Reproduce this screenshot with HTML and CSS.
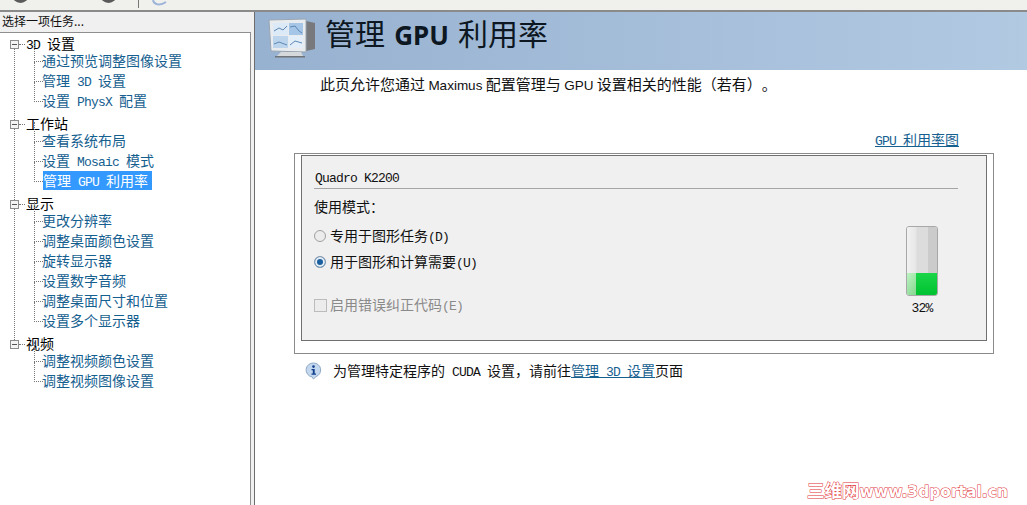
FILE: index.html
```html
<!DOCTYPE html>
<html lang="zh-CN">
<head>
  <meta charset="UTF-8">
  <title>管理 GPU 利用率</title>
  <link rel="stylesheet" href="styles.css">
</head>
<body>

  <div class="barra">
    <span class="bola"></span>
    <span class="bola bola-2"></span>
    <span class="separador"></span>
    <svg class="barra-icone" width="16" height="11" viewBox="0 0 16 11"><path d="M1 0 C2 5 8 6 14 2" fill="none" stroke="#9db5d8" stroke-width="2"/></svg>
  </div>

  <div class="janela">
    <div class="menu-lateral">
      <div class="menu-titulo">选择一项任务...</div>
      <div class="arvore">
        <div class="grupo">
          <div class="grupo-nome"><span class="caixa"></span><span class="en">3D </span>设置</div>
          <div class="item">通过预览调整图像设置</div>
          <div class="item">管理<span class="en"> 3D </span>设置</div>
          <div class="item">设置<span class="en"> PhysX </span>配置</div>
        </div>
        <div class="grupo">
          <div class="grupo-nome"><span class="caixa"></span>工作站</div>
          <div class="item">查看系统布局</div>
          <div class="item">设置<span class="en"> Mosaic </span>模式</div>
          <div class="item"><span class="ativo">管理<span class="en"> GPU </span>利用率</span></div>
        </div>
        <div class="grupo">
          <div class="grupo-nome"><span class="caixa"></span>显示</div>
          <div class="item">更改分辨率</div>
          <div class="item">调整桌面颜色设置</div>
          <div class="item">旋转显示器</div>
          <div class="item">设置数字音频</div>
          <div class="item">调整桌面尺寸和位置</div>
          <div class="item">设置多个显示器</div>
        </div>
        <div class="grupo">
          <div class="grupo-nome"><span class="caixa"></span>视频</div>
          <div class="item">调整视频颜色设置</div>
          <div class="item">调整视频图像设置</div>
        </div>
      </div>
    </div>

    <div class="conteudo">
      <div class="cabecalho">
        <svg class="monitor" width="48" height="40" viewBox="0 0 48 40">
          <path d="M38 3 L47 5 V31 L38 33 Z" fill="#77797c"/>
          <path d="M1 2 L38 1 V34 L3 33 Z" fill="#e8ecef" stroke="#9aa6b2" stroke-width="1"/>
          <rect x="5" y="5" width="15" height="12" fill="#dce9f6"/>
          <rect x="21" y="5" width="14" height="12" fill="#a5c6e6"/>
          <rect x="5" y="18" width="15" height="12" fill="#bcd5ec"/>
          <rect x="21" y="18" width="14" height="12" fill="#e3eef8"/>
          <path d="M6 13 L11 10 L15 12 L19 8 M22 9 L27 8 L31 13 L34 15 M6 26 L11 24 L19 27 M22 27 L27 23 L34 25" fill="none" stroke="#5d88b5" stroke-width="1"/>
          <path d="M13 34 H33 L35 38 H9 Z" fill="#d6d9dc"/>
          <rect x="7" y="38" width="30" height="1.5" fill="#6f7478"/>
        </svg>
        <h1 class="titulo">管理 <span class="titulo-en">GPU</span> 利用率</h1>
      </div>

      <p class="descricao">此页允许您通过 <span class="sans">Maximus</span> 配置管理与 <span class="sans">GPU</span> 设置相关的性能（若有）。</p>

      <div class="link-linha"><a class="link" href="#"><span class="en">GPU </span>利用率图</a></div>

      <div class="caixa-externa">
        <div class="painel">
          <div class="placa"><span class="en">Quadro K2200</span></div>
          <div class="painel-corpo">
            <div class="opcoes">
              <div class="modo">使用模式：</div>
              <div class="opcao opcao-1"><span class="radio"></span><span>专用于图形任务<span class="en">(D)</span></span></div>
              <div class="opcao opcao-2"><span class="radio radio-on"></span><span>用于图形和计算需要<span class="en">(U)</span></span></div>
              <div class="opcao opcao-3 desativado"><span class="check"></span><span>启用错误纠正代码<span class="en">(E)</span></span></div>
            </div>
            <div class="medidor-col">
              <div class="medidor">
                <div class="medidor-vazio"></div>
                <div class="medidor-cheio" style="height: 32%"></div>
              </div>
              <div class="medidor-valor en">32%</div>
            </div>
          </div>
        </div>
      </div>

      <div class="aviso">
        <svg class="info" width="17" height="18" viewBox="0 0 17 18">
          <path d="M8.5 1 A7 7 0 0 1 11 14.6 L8.5 17 L7 14.9 A7 7 0 0 1 8.5 1 Z" fill="#c3d8ee" stroke="#8fa9c6" stroke-width="1"/>
          <circle cx="8.5" cy="4.6" r="1.3" fill="#123f8c"/>
          <path d="M6.5 7 H9.7 V11.6 H11 V12.8 H6.5 V11.6 H7.8 V8.2 H6.5 Z" fill="#123f8c"/>
        </svg>
        <span>为管理特定程序的<span class="en"> CUDA </span>设置，请前往<a class="link" href="#">管理<span class="en"> 3D </span>设置</a>页面</span>
      </div>
    </div>
  </div>

  <div class="marca">三维网<span class="marca-en">www.3dportal.cn</span></div>

</body>
</html>
```

FILE: styles.css
```css
* {
  box-sizing: border-box;
  margin: 0;
  padding: 0;
}

html, body {
  height: 100%;
  overflow: hidden;
}

body {
  display: flex;
  flex-direction: column;
  position: relative;
  background-color: #ffffff;
  color: #111;
  font-family: "Noto Sans CJK SC", "Liberation Sans", sans-serif;
  font-size: 14px;
  line-height: 14px;
  text-spacing-trim: space-all;
}

/* latim monoespacado, 7px por caractere como no original */
.en {
  font-family: "Liberation Mono", "Noto Sans CJK SC", monospace;
  font-size: 13px;
  letter-spacing: -0.8px;
  white-space: pre;
}

.sans {
  font-family: "Liberation Sans", sans-serif;
  font-size: 13.5px;
}

.barra {
  display: flex;
  flex: none;
  height: 12px;
  overflow: hidden;
  background-color: #f0f0ed;
  border-bottom: 2px solid #8a8a8a;
}

.bola {
  width: 17px;
  height: 17px;
  margin: -14px 0 0 12px;
  border-radius: 50%;
  background-color: #5a5a5a;
}

.bola-2 {
  margin-left: 71px;
}

.separador {
  width: 1px;
  height: 8px;
  margin-left: 21px;
  background-color: #777;
}

.barra-icone {
  margin-left: 13px;
}

.janela {
  display: flex;
  flex: 1;
  min-height: 0;
}

.menu-lateral {
  display: flex;
  flex-direction: column;
  width: 254px;
  flex: none;
  background-color: #f0f0f0;
  padding-right: 3px;
}

.menu-titulo {
  height: 20px;
  padding: 1px 0 0 2px;
  font-size: 12px;
  line-height: 16px;
}

.arvore {
  flex: 1;
  padding: 3px 0 0 0;
  background-color: #ffffff;
  border: 1px solid #8e8e8e;
  border-bottom: none;
  border-left: none;
}

.grupo {
  position: relative;
  margin-bottom: 6px;
}

.grupo:not(:last-child)::before {
  content: "";
  position: absolute;
  left: 14px;
  top: 13px;
  bottom: -12px;
  border-left: 1px dotted #777;
}

.grupo-nome {
  height: 14px;
  padding-left: 26px;
  color: #000;
  white-space: pre;
}

.caixa {
  position: absolute;
  left: 10px;
  top: 4px;
  width: 9px;
  height: 9px;
  background-color: #f4f4f4;
  border: 1px solid #8c8c8c;
}

.caixa::before {
  content: "";
  position: absolute;
  left: 1px;
  top: 3px;
  width: 5px;
  height: 1px;
  background-color: #555;
}

.caixa::after {
  content: "";
  position: absolute;
  left: 8px;
  top: 3px;
  width: 6px;
  border-top: 1px dotted #777;
}

.item {
  position: relative;
  height: 20px;
  padding-left: 42px;
  color: #15608f;
  line-height: 20px;
  white-space: pre;
}

.item::before {
  content: "";
  position: absolute;
  left: 34px;
  top: -8px;
  width: 8px;
  height: 19px;
  border-left: 1px dotted #777;
  border-bottom: 1px dotted #777;
}

.ativo {
  display: inline-block;
  height: 19px;
  margin: 1px 0 0 1px;
  padding-right: 4px;
  background-color: #3399ff;
  color: #ffffff;
  line-height: 19px;
  vertical-align: top;
}

.conteudo {
  flex: 1;
  min-width: 0;
  border-left: 1px solid #6d6d6d;
}

.cabecalho {
  display: flex;
  height: 58px;
  padding: 6px 0 0 13px;
  background: linear-gradient(to right, #97b1d0, #b2c9e2);
}

.monitor {
  flex: none;
}

.titulo {
  margin: -3px 0 0 9px;
  color: #0d1722;
  font-size: 30px;
  font-weight: normal;
  line-height: 34px;
  word-spacing: 2.5px;
  white-space: pre;
}

.titulo-en {
  font-family: "Noto Sans", sans-serif;
  font-size: 26px;
  font-weight: bold;
}

.descricao {
  height: 21px;
  padding: 6px 0 0 65px;
  font-size: 15px;
  line-height: 15px;
}

.link-linha {
  height: 14px;
  margin-top: 41px;
  padding-right: 68px;
  text-align: right;
}

.link {
  color: #15608f;
  text-decoration: underline;
}

.caixa-externa {
  margin: 7px 33px 0 39px;
  border: 1px solid #8a8a8a;
}

.painel {
  margin: 1px 6px 12px 6px;
  height: 186px;
  padding: 13px 28px 0 12px;
  background-color: #f0f0f0;
  border: 1px solid #6f6f6f;
}

.placa {
  height: 20px;
  padding-left: 1px;
  border-bottom: 1px solid #a5a5a5;
}

.painel-corpo {
  display: flex;
  justify-content: space-between;
}

.modo {
  height: 14px;
  margin-top: 10px;
}

.opcao {
  display: flex;
  align-items: center;
  height: 14px;
}

.opcao-1 {
  margin-top: 16px;
}

.opcao-2 {
  margin-top: 12px;
}

.opcao-3 {
  margin-top: 29px;
}

.desativado {
  color: #8a8a8a;
}

.radio {
  width: 12px;
  height: 12px;
  margin-right: 4px;
  border-radius: 50%;
  background-color: #ececec;
  border: 1px solid #a0a0a0;
}

.radio-on {
  background-color: #1b5f9e;
  border: 1px solid #8b9db0;
  box-shadow: inset 0 0 0 2px #e6eef6;
}

.check {
  width: 13px;
  height: 13px;
  margin-right: 3px;
  background-color: #ececec;
  border: 1px solid #bcbcbc;
}

.medidor-col {
  display: flex;
  flex-direction: column;
  align-items: center;
  width: 32px;
  margin: 37px 20px 0 0;
}

.medidor {
  display: flex;
  flex-direction: column;
  width: 32px;
  height: 70px;
  overflow: hidden;
  border: 1px solid #a8a8a8;
  border-radius: 3px;
}

.medidor-vazio {
  flex: 1;
  background: linear-gradient(to right, #f2f2f2 0, #e6e6e6 9px, #dcdcdc 10px, #dcdcdc 21px, #cbcbcb 21px);
}

.medidor-cheio {
  background:
    linear-gradient(to bottom, rgba(255, 255, 255, 0.1), rgba(0, 120, 30, 0.15)),
    linear-gradient(to right, #b6f2bb 0, #9be8a4 9px, #00d034 9px);
}

.medidor-valor {
  margin-top: 6px;
  white-space: nowrap;
}

.aviso {
  display: flex;
  align-items: center;
  height: 18px;
  margin: 8px 0 0 50px;
  gap: 11px;
  white-space: pre;
}

.marca {
  position: absolute;
  left: 807px;
  top: 481px;
  color: #ffffff;
  font-family: "Noto Sans CJK SC", sans-serif;
  font-size: 17.5px;
  font-weight: bold;
  line-height: 18px;
  -webkit-text-stroke: 1px #e0333a;
  paint-order: stroke fill;
  white-space: nowrap;
}

.marca-en {
  font-family: "DejaVu Sans", sans-serif;
  font-size: 15.5px;
}
```
